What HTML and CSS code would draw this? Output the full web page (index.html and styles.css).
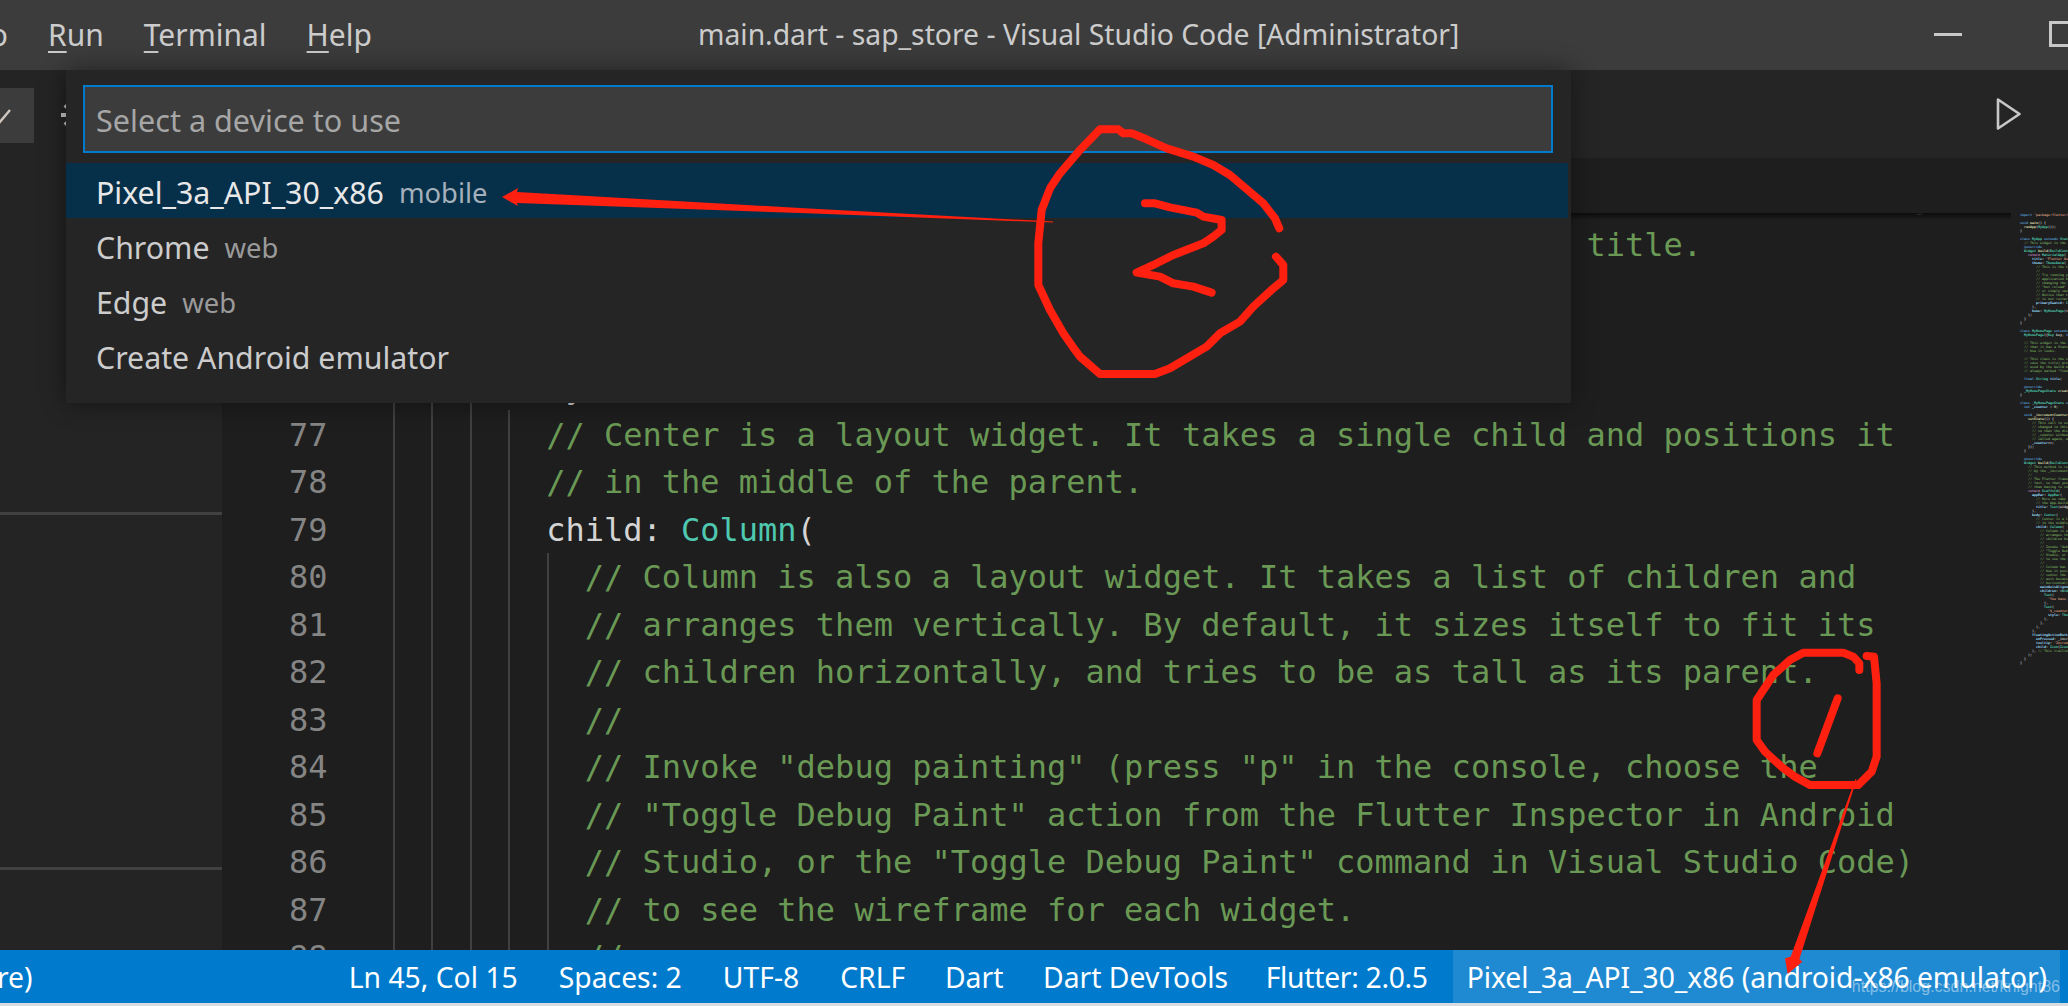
FILE: index.html
```html
<!DOCTYPE html>
<html lang="en">
<head>
<meta charset="utf-8">
<title>main.dart - sap_store - Visual Studio Code [Administrator]</title>
<link rel="stylesheet" href="styles.css">
</head>
<body>
<header class="titlebar">
  <nav class="menu">
    <span class="menu-item menu-go">Go</span>
    <span class="menu-item"><u>R</u>un</span>
    <span class="menu-item"><u>T</u>erminal</span>
    <span class="menu-item"><u>H</u>elp</span>
  </nav>
  <div class="window-title">main.dart - sap_store - Visual Studio Code [Administrator]</div>
  <div class="window-controls">
    <span class="win-min"></span>
    <span class="win-max"></span>
  </div>
</header>

<main class="workbench">
  <aside class="sidebar">
    <section class="pane pane-top">
      <div class="side-head">
        <div class="side-tab">
          <svg class="tab-check" width="12" height="16" viewBox="0 0 12 16"><path d="M-1 15L10 2" fill="none" stroke="#d0c8c0" stroke-width="2.4"/></svg>
        </div>
        <svg class="gear" width="30" height="30" viewBox="0 0 30 30"><circle cx="15" cy="15" r="7" fill="none" stroke="#c5c5c5" stroke-width="3"/><path d="M15 1v6M15 23v6M1 15h6M23 15h6M5 5l4 4M21 21l4 4M25 5l-4 4M9 21l-4 4" stroke="#c5c5c5" stroke-width="4"/></svg>
      </div>
    </section>
    <section class="pane pane-mid"></section>
    <section class="pane pane-end"></section>
  </aside>

  <section class="editor">
    <div class="toolbar">
      <svg class="play" width="26" height="34" viewBox="0 0 26 34"><path d="M2 2.5L23.5 17L2 31.5Z" fill="none" stroke="#c8c8c8" stroke-width="2.6" stroke-linejoin="round"/></svg>
    </div>
    <div class="breadcrumbs"></div>
    <div class="editor-body">
      <div class="code">
        <span class="guide g1"></span><span class="guide g2"></span><span class="guide g3"></span><span class="guide g4"></span><span class="guide g5"></span>
        <div class="code-lines">
          <div class="line"><span class="num">72</span><span class="txt c">        // Here we take the value from the MyHomePage object that was created by</span></div>
          <div class="line"><span class="num">73</span><span class="txt c">        // the App.build method, and use it to set our appbar title.</span></div>
          <div class="line"><span class="num">74</span><span class="txt">        title: <span class="t">Text</span>(widget.title),</span></div>
          <div class="line"><span class="num">75</span><span class="txt">      ),</span></div>
          <div class="line"><span class="num">76</span><span class="txt">      body: <span class="t">Center</span>(</span></div>
          <div class="line"><span class="num">77</span><span class="txt c">        // Center is a layout widget. It takes a single child and positions it</span></div>
          <div class="line"><span class="num">78</span><span class="txt c">        // in the middle of the parent.</span></div>
          <div class="line"><span class="num">79</span><span class="txt">        child: <span class="t">Column</span>(</span></div>
          <div class="line"><span class="num">80</span><span class="txt c">          // Column is also a layout widget. It takes a list of children and</span></div>
          <div class="line"><span class="num">81</span><span class="txt c">          // arranges them vertically. By default, it sizes itself to fit its</span></div>
          <div class="line"><span class="num">82</span><span class="txt c">          // children horizontally, and tries to be as tall as its parent.</span></div>
          <div class="line"><span class="num">83</span><span class="txt c">          //</span></div>
          <div class="line"><span class="num">84</span><span class="txt c">          // Invoke "debug painting" (press "p" in the console, choose the</span></div>
          <div class="line"><span class="num">85</span><span class="txt c">          // "Toggle Debug Paint" action from the Flutter Inspector in Android</span></div>
          <div class="line"><span class="num">86</span><span class="txt c">          // Studio, or the "Toggle Debug Paint" command in Visual Studio Code)</span></div>
          <div class="line"><span class="num">87</span><span class="txt c">          // to see the wireframe for each widget.</span></div>
          <div class="line"><span class="num">88</span><span class="txt c">          //</span></div>
        </div>
      </div>
      <div class="minimap"><pre class="mini"><span class="k">import</span> <span class="s">'package:flutter/material.dart'</span>;

<span class="k">void</span> <span class="f">main</span>() {
  <span class="f">runApp</span>(<span class="t">MyApp</span>());
}

<span class="k">class</span> <span class="t">MyApp</span> <span class="k">extends</span> <span class="t">StatelessWidget</span> {
<span class="c">  // This widget is the root of your application.</span>
  <span class="k">@override</span>
  <span class="t">Widget</span> <span class="f">build</span>(<span class="t">BuildContext</span> <span class="v">context</span>) {
    <span class="p">return</span> <span class="t">MaterialApp</span>(
      <span class="v">title</span>: <span class="s">'Flutter Demo'</span>,
      <span class="v">theme</span>: <span class="t">ThemeData</span>(
<span class="c">        // This is the theme of your application.
        //
        // Try running your application with "flutter run".
        // application has a blue toolbar. Then, without
        // changing the primarySwatch below to Colors.green
        // "hot reload" (press "r" in the console where you
        // or simply save your changes to "hot reload" in a
        // Notice that the counter didn't reset back to zero
        // is not restarted.</span>
        <span class="v">primarySwatch</span>: <span class="t">Colors</span>.blue,
      ),
      <span class="v">home</span>: <span class="t">MyHomePage</span>(title: <span class="s">'Flutter Demo'</span>),
    );
  }
}

<span class="k">class</span> <span class="t">MyHomePage</span> <span class="k">extends</span> <span class="t">StatefulWidget</span> {
  <span class="t">MyHomePage</span>({<span class="t">Key</span> key, <span class="k">this</span>.title}) : <span class="k">super</span>(key: key);

<span class="c">  // This widget is the home page of your application.
  // that it has a State object (defined below) that
  // how it looks.

  // This class is the configuration for the state. It
  // case the title) provided by the parent (in this
  // used by the build method of the State. Fields in
  // always marked "final".</span>

  <span class="k">final</span> <span class="t">String</span> <span class="v">title</span>;

  <span class="k">@override</span>
  <span class="t">_MyHomePageState</span> <span class="f">createState</span>() =&gt; <span class="t">_MyHomePageState</span>();
}

<span class="k">class</span> <span class="t">_MyHomePageState</span> <span class="k">extends</span> <span class="t">State</span>&lt;<span class="t">MyHomePage</span>&gt; {
  <span class="k">int</span> <span class="v">_counter</span> = <span class="n">0</span>;

  <span class="k">void</span> <span class="f">_incrementCounter</span>() {
    <span class="f">setState</span>(() {
<span class="c">      // This call to setState tells the Flutter framework
      // changed in this State, which causes it to rerun
      // so that the display can reflect the updated values
      // _counter without calling setState(), then the build
      // called again, and so nothing would appear to happen.</span>
      <span class="v">_counter</span>++;
    });
  }

  <span class="k">@override</span>
  <span class="t">Widget</span> <span class="f">build</span>(<span class="t">BuildContext</span> <span class="v">context</span>) {
<span class="c">    // This method is rerun every time setState is called
    // by the _incrementCounter method above.
    //
    // The Flutter framework has been optimized to make
    // fast, so that you can just rebuild anything that
    // than having to individually change instances of</span>
    <span class="p">return</span> <span class="t">Scaffold</span>(
      <span class="v">appBar</span>: <span class="t">AppBar</span>(
<span class="c">        // Here we take the value from the MyHomePage object
        // the App.build method, and use it to set our appbar</span>
        <span class="v">title</span>: <span class="t">Text</span>(widget.title),
      ),
      <span class="v">body</span>: <span class="t">Center</span>(
<span class="c">        // Center is a layout widget. It takes a single child
        // in the middle of the parent.</span>
        <span class="v">child</span>: <span class="t">Column</span>(
<span class="c">          // Column is also a layout widget. It takes a list
          // arranges them vertically. By default, it sizes
          // children horizontally, and tries to be as tall
          //
          // Invoke "debug painting" (press "p" in the console
          // "Toggle Debug Paint" action from the Flutter
          // Studio, or the "Toggle Debug Paint" command in
          // to see the wireframe for each widget.
          //
          // Column has various properties to control how it
          // how it positions its children. Here we use
          // center the children vertically; the main axis
          // axis because Columns are vertical (the cross
          // horizontal).</span>
          <span class="v">mainAxisAlignment</span>: <span class="t">MainAxisAlignment</span>.center,
          <span class="v">children</span>: &lt;<span class="t">Widget</span>&gt;[
            <span class="t">Text</span>(
              <span class="s">'You have pushed the button this many'</span>,
            ),
            <span class="t">Text</span>(
              <span class="s">'$_counter'</span>,
              <span class="v">style</span>: <span class="t">Theme</span>.of(context).textTheme,
            ),
          ],
        ),
      ),
      <span class="v">floatingActionButton</span>: <span class="t">FloatingActionButton</span>(
        <span class="v">onPressed</span>: _incrementCounter,
        <span class="v">tooltip</span>: <span class="s">'Increment'</span>,
        <span class="v">child</span>: <span class="t">Icon</span>(<span class="t">Icons</span>.add),
      ), <span class="c">// This trailing comma makes auto-formatting</span>
    );
  }
}</pre></div>
    </div>
  </section>
</main>

<footer class="statusbar">
  <span class="status-left">re)</span>
  <div class="status-right">
    <span class="status-item">Ln 45, Col 15</span>
    <span class="status-item">Spaces: 2</span>
    <span class="status-item">UTF-8</span>
    <span class="status-item">CRLF</span>
    <span class="status-item status-dart">Dart</span>
    <span class="status-item status-tools">Dart DevTools</span>
    <span class="status-item status-flutter">Flutter: 2.0.5</span>
    <span class="status-item status-device">Pixel_3a_API_30_x86 (android-x86 emulator)</span>
  </div>
</footer>
<div class="bottom-edge"></div>

<div class="quick-input">
  <div class="qi-box">Select a device to use</div>
  <ul class="qi-list">
    <li class="qi-row qi-selected"><span class="qi-label">Pixel_3a_API_30_x86</span><span class="qi-desc">mobile</span></li>
    <li class="qi-row"><span class="qi-label">Chrome</span><span class="qi-desc">web</span></li>
    <li class="qi-row"><span class="qi-label">Edge</span><span class="qi-desc">web</span></li>
    <li class="qi-row"><span class="qi-label">Create Android emulator</span></li>
  </ul>
</div>

<svg class="ink" width="2068" height="1006" viewBox="0 0 2068 1006">
  <g transform="translate(1000 100) scale(.3333)" fill="none" stroke="#ff2010" stroke-width="24" stroke-linecap="round" stroke-linejoin="round">
    <path d="M838 385L825 355L790 310L690 225L640 195L580 170L500 145L440 118L395 100L370 100L355 88L300 88L240 150L180 220L150 265L125 330L115 430L115 555L150 630L190 700L225 750L240 770L300 822L465 822L510 805L620 740L660 700L720 665L760 620L820 565L850 540L850 495L828 470"/>
    <path d="M435 310L465 310L510 322L590 338L610 350L665 360L665 390L640 410L610 430L520 465L460 495L410 518L480 530L520 550L580 560L635 578"/>
  </g>
  <polygon fill="#ff2010" points="502,197 518,188 517,192 800,208 1053,221.5 1053,222.5 800,213 517,203 518,206"/>
  <g transform="translate(1740 640) scale(.3333)" fill="none" stroke="#ff2010" stroke-width="24" stroke-linecap="round" stroke-linejoin="round">
    <path d="M358 90L358 70L340 50L310 38L190 38L150 60L100 105L50 180L50 300L75 335L130 385L165 410L210 435L355 435L395 395L410 350L410 130L402 50L380 48"/>
    <path d="M293 175L232 340"/>
    <polygon fill="#ff2010" stroke="none" points="346,418 350,418 178,958 187,965 143,1002 135,955 152,950"/>
  </g>
</svg>
<div class="watermark">https://blog.csdn.net/knight86</div>
</body>
</html>
```
FILE: styles.css
```css
* { box-sizing: border-box; }
html, body { margin: 0; padding: 0; }
body {
  width: 2068px;
  height: 1006px;
  overflow: hidden;
  position: relative;
  display: flex;
  flex-direction: column;
  background: #1e1e1e;
  font-family: "Noto Sans", "Open Sans", sans-serif;
  color: #cccccc;
}

/* title bar */
.titlebar {
  flex: 0 0 70px;
  display: flex;
  align-items: center;
  padding-bottom: 2px;
  background: #3c3c3c;
  font-size: 30px;
  overflow: hidden;
  white-space: nowrap;
}
.menu { display: flex; width: 371px; flex: none; }
.menu-item { margin-left: 40px; color: #cccccc; }
.menu-go { margin-left: -32px; }
.menu u { text-underline-offset: 5px; text-decoration-thickness: 2px; }
.window-title { margin-left: 327px; color: #cccccc; font-size: 28.3px; }
.window-controls {
  margin-left: auto;
  display: flex;
  align-items: center;
  gap: 87px;
  margin-right: -21px;
}
.win-min { width: 28px; height: 3px; background: #c8c8c8; }
.win-max { width: 40px; height: 26px; border: 3px solid #c8c8c8; }

/* workbench */
.workbench { flex: 0 0 880px; display: flex; min-height: 0; }
.sidebar {
  flex: 0 0 222px;
  display: flex;
  flex-direction: column;
  background: #242425;
}
.pane-top { flex: 0 0 445px; border-bottom: 3px solid #414141; }
.pane-mid { flex: 0 0 355px; border-bottom: 3px solid #414141; }
.pane-end { flex: 1; }
.side-head { display: flex; align-items: flex-start; padding-top: 18px; }
.side-tab { width: 34px; height: 55px; background: #3c3c3c; padding-top: 20px; }
.tab-check { display: block; }
.gear { margin: 12px 0 0 26px; flex: none; }

.editor { flex: 1; display: flex; flex-direction: column; min-width: 0; background: #1e1e1e; }
.toolbar {
  flex: 0 0 88px;
  display: flex;
  justify-content: flex-end;
  align-items: center;
  padding-right: 46px;
  background: #252526;
}
.play { display: block; }
.breadcrumbs { flex: 0 0 55px; background: #1e1e1e; }
.editor-body { flex: 1; display: flex; min-height: 0; }

.code {
  flex: 1;
  position: relative;
  overflow: hidden;
  font-family: "DejaVu Sans Mono", "Liberation Mono", monospace;
  font-size: 32px;
  color: #d4d4d4;
}
.code::after {
  content: "";
  position: absolute;
  left: 0; right: 0; top: 0;
  height: 7px;
  background: linear-gradient(#0c0c0c, rgba(30,30,30,0));
}
.code-lines { margin-top: -39px; }
.line { display: flex; height: 47.5px; line-height: 47.5px; white-space: pre; }
.num { flex: 0 0 105.5px; text-align: right; color: #858585; }
.txt { margin-left: 64.5px; }
.c { color: #6a9955; }
.t { color: #4ec9b0; }

.guide { position: absolute; width: 2px; bottom: 0; top: 0; background: #404040; }
.g1 { left: 171px; }
.g2 { left: 209px; }
.g3 { left: 248px; }
.g4 { left: 286px; top: 197px; }
.g5 { left: 325px; top: 340px; }

.minimap { flex: 0 0 57px; padding: 0 0 0 9px; overflow: hidden; }
.mini {
  margin: 0;
  font-family: "DejaVu Sans Mono", monospace;
  font-size: 3.32px;
  font-weight: 700;
  line-height: 4px;
  color: #c8c8c8;
}
.mini .k { color: #569cd6; }
.mini .t { color: #4ec9b0; }
.mini .c { color: #6a9955; }
.mini .s { color: #ce9178; }
.mini .f { color: #dcdcaa; }
.mini .p { color: #c586c0; }
.mini .v { color: #9cdcfe; }
.mini .n { color: #b5cea8; }

/* status bar */
.statusbar {
  flex: 0 0 53px;
  display: flex;
  align-items: stretch;
  background: #007acc;
  color: #ffffff;
  font-size: 28.3px;
  white-space: nowrap;
}
.status-left { display: flex; align-items: center; margin-left: -3px; padding-top: 1px; }
.status-right { margin-left: auto; margin-right: 8px; display: flex; align-items: stretch; }
.status-item { display: flex; align-items: center; padding: 1px 20.5px 0; }
.status-dart { margin-left: -1.3px; }
.status-tools { margin-left: -1.3px; }
.status-flutter { letter-spacing: -.3px; margin-left: -3.4px; }
.status-device { background: #1f8ad2; padding: 1px 13px 0 14px; margin-left: 4.4px; letter-spacing: -.06px; }
.bottom-edge { flex: 0 0 3px; background: #d9dcde; }

/* quick input */
.quick-input {
  position: absolute;
  left: 66px;
  top: 70px;
  width: 1505px;
  height: 333px;
  padding: 15px 3px 0 0;
  background: #252526;
  box-shadow: 0 0 24px rgba(0,0,0,.45);
  font-size: 30.3px;
}
.qi-box {
  margin: 0 15px 0 17px;
  height: 68px;
  display: flex;
  align-items: center;
  padding: 1px 0 0 11px;
  background: #3c3c3c;
  border: 2px solid #007acc;
  color: #a6a6a6;
  font-size: 30.6px;
}
.qi-list { list-style: none; margin: 10px 0 0; padding: 0; }
.qi-row { height: 55px; display: flex; align-items: center; padding: 4px 0 0 30px; }
.qi-selected { background: #062f4a; color: #e8e8e8; }
.qi-desc { margin-left: 15px; font-size: 27.4px; color: #9a9a9a; }
.qi-selected .qi-desc { color: #a4b0ba; }

/* annotations */
.ink { position: absolute; left: 0; top: 0; pointer-events: none; }
.watermark {
  position: absolute;
  right: 8px;
  top: 977px;
  font-family: "Liberation Sans", sans-serif;
  font-size: 16px;
  line-height: 20px;
  color: rgba(255,255,255,.45);
  white-space: nowrap;
}
```
